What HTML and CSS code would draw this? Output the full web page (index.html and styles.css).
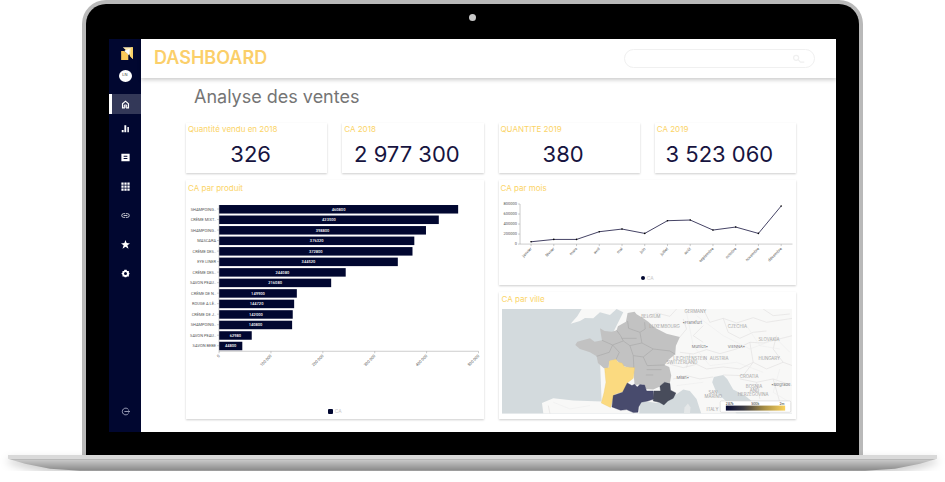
FILE: index.html
```html
<!DOCTYPE html>
<html lang="fr">

<head>
  <meta charset="UTF-8">
  <meta name="viewport" content="width=device-width, initial-scale=1.0">
  <title>Dashboard</title>
  <link rel="stylesheet" href="styles.css">
</head>

<body>
  <div class="laptop">
    <div class="lid">
      <div class="camera-row"><span class="camera"></span></div>
      <div class="screen">
        <nav class="sidebar">
          <a href="#" class="logo" aria-label="Accueil">
            <svg viewBox="0 0 36 40" width="12" height="13">
              <path d="M0 12H9L22 22V40H0Z" fill="#fbc95a" />
              <path d="M5 1H36V37L27 27L24 21L10 12L14 9Z" fill="#fde9ae" />
              <path d="M30 1H36V37L28 29Z" fill="#fbd263" />
              <path d="M10 12L26 5L24 25Z" fill="#fff" />
            </svg>
          </a>
          <span class="avatar">LN</span>
          <div class="menu">
            <a href="#" class="active" aria-label="Tableau de bord">
              <svg viewBox="0 0 24 24"><path d="M4 10L12 3L20 10V21H15V14H9V21H4Z" fill="none" stroke="#fff" stroke-width="3" /><path d="M10 12H14V21H10Z" fill="#aab" /></svg>
            </a>
            <a href="#" aria-label="Statistiques">
              <svg viewBox="0 0 24 24"><path d="M2 16H7V22H2ZM9 3H14V22H9ZM17 8H21V22H17Z" /></svg>
            </a>
            <a href="#" aria-label="Rapports">
              <svg viewBox="0 0 24 24"><path fill-rule="evenodd" d="M1 2H23V22H1ZM7 7V10H17V7ZM7 13V16H17V13Z" /></svg>
            </a>
            <a href="#" aria-label="Applications">
              <svg viewBox="0 0 24 24"><path d="M1 1H7V7H1ZM9 1H15V7H9ZM17 1H23V7H17ZM1 9H7V15H1ZM9 9H15V15H9ZM17 9H23V15H17ZM1 17H7V23H1ZM9 17H15V23H9ZM17 17H23V23H17Z" /></svg>
            </a>
            <a href="#" aria-label="Liens">
              <svg viewBox="0 0 24 24"><path d="M11 7H7A5 5 0 0 0 7 17H11M13 7H17A5 5 0 0 1 17 17H13M7 12H17" fill="none" stroke="#fff" stroke-width="2" /></svg>
            </a>
            <a href="#" aria-label="Favoris">
              <svg viewBox="0 0 24 24"><path d="M12 0L15 8L24 9L17 14L20 23L12 18L4 23L7 14L0 9L9 8Z" /></svg>
            </a>
            <a href="#" aria-label="Paramètres">
              <svg viewBox="0 0 24 24"><path fill-rule="evenodd" d="M9 2H15L16 5H21V10L23 12L21 15V20H16L14 22H10L8 20H4V15L1 12L4 9V5H8ZM12 8A4 4 0 1 0 12 16A4 4 0 1 0 12 8Z" /></svg>
            </a>
          </div>
          <a href="#" class="logout" aria-label="Déconnexion">
            <svg viewBox="0 0 24 24"><path d="M20 7A9 9 0 1 0 20 17M9 12H23M20 9L23 12L20 15" fill="none" stroke="#c5c8dc" stroke-width="2" /></svg>
          </a>
        </nav>

        <div class="page">
          <header class="topbar">
            <h1>DASHBOARD</h1>
            <div class="search">
              <input type="search" aria-label="Rechercher">
              <svg viewBox="0 0 24 16" width="16" height="10"><circle cx="9" cy="6" r="4" /><path d="M12 9L16 13H22" /></svg>
            </div>
          </header>

          <main>
            <h2>Analyse des ventes</h2>
            <div class="grid">
              <section class="card kpi">
                <h3>Quantité vendu en 2018</h3>
                <p>326</p>
              </section>
              <section class="card kpi">
                <h3>CA 2018</h3>
                <p>2 977 300</p>
              </section>
              <section class="card kpi">
                <h3>QUANTITE 2019</h3>
                <p>380</p>
              </section>
              <section class="card kpi">
                <h3>CA 2019</h3>
                <p>3 523 060</p>
              </section>

              <section class="card products">
                <h3>CA par produit</h3>
                <svg class="chart" id="barChart" viewBox="0 0 297 200"></svg>
                <div class="legend"><span class="square"></span>CA</div>
              </section>

              <section class="card months">
                <h3>CA par mois</h3>
                <svg class="chart" id="lineChart" viewBox="0 0 297 76"></svg>
                <div class="legend"><span class="dot"></span>CA</div>
              </section>

              <section class="card cities">
                <h3>CA par ville</h3>
                <svg class="map" viewBox="36 70 872 314">
                  <defs>
                    <linearGradient id="scale">
                      <stop offset="0" stop-color="#070b35" />
                      <stop offset=".3" stop-color="#3b3a42" />
                      <stop offset=".65" stop-color="#a88f45" />
                      <stop offset="1" stop-color="#fbd35c" />
                    </linearGradient>
                  </defs>
                  <rect x="36" y="70" width="872" height="314" fill="#d3dadd" />
                  <!-- land -->
                  <path fill="#f8f8f7" d="M275 70H908V384H842L800 358L765 330L730 312L712 280L700 268L672 274L667 290L676 312L690 330L712 350L740 384H634L620 340L600 316L580 312L560 326L500 352L450 344L448 384H160L156 352L190 338L250 345L335 348L330 220L400 80L380 70L360 88L330 80L310 98L285 97L270 106L242 114L262 92Z" />
                  <path fill="#e4e7e8" d="M582 384L584 366L594 354L602 366L600 384Z" />
                  <!-- borders -->
                  <g fill="none" stroke="#e2e1e1" stroke-width="2">
                    <path d="M470 94L500 82L540 92L560 70M570 154L590 130L580 100M640 70L660 110L700 98L740 112L790 96L830 110L908 98M570 200L610 205L650 192L690 204L740 190L780 170L820 172L908 150" />
                    <path d="M700 98L715 140L750 158L790 140L830 136M540 236L580 246L620 236L650 250L700 244L750 250L790 230L830 250L880 230L908 240M780 170L790 230L760 270L700 268M750 280L800 290L850 280L908 300M800 290L810 340M850 280L870 350" />
                    <path d="M820 70L850 90L900 85M550 280L590 270L630 280L670 274M600 205L590 246M860 150L850 190L880 230M180 384L175 360M640 120L610 150L640 170" />
                  </g>
                  <g fill="none" stroke="#eeeeee" stroke-width="2">
                    <path d="M590 80L610 180L660 240L740 230L820 260M620 90L700 150L780 190L860 160L900 200M560 300L640 290M190 350L240 370L300 360M770 120L810 180L870 190M870 250L850 320L900 350" />
                  </g>
                  <!-- regions -->
                  <path fill="#c2c2c2" d="M413 82L434 78L440 86L460 98L475 108L495 126L530 144L570 154L558 180L556 206L536 222L524 238L538 244L544 270L540 292L524 290L512 302L490 312L468 310L460 296L434 298L430 250L398 240L378 222L358 226L356 246L342 248L324 232L320 212L300 200L270 190L256 178L262 168L300 158L314 168L336 164L330 128L344 136L366 138L380 134L384 122L408 108Z" />
                  <g fill="none" stroke="#a9a9a9" stroke-width="2">
                    <path d="M413 106L416 128L450 140L466 130L464 110M336 164L368 178L400 166L392 150L380 134M450 140L456 172L490 190L540 196L556 206M368 178L358 200L320 212M400 166L420 180L456 172M368 178L388 200L378 222M420 180L430 210L460 214L490 190M430 210L432 250M460 214L472 240L524 238M395 158H440M470 252H515M468 268H490" />
                  </g>
                  <path fill="#fbda80" stroke="#e9c76d" d="M358 226L378 221L384 230L396 232L404 244L434 246L430 278L412 292L406 306L400 318L374 326L366 350L362 366L334 352L342 322L348 290L344 248L358 246Z" />
                  <path fill="#484b6d" stroke="#35385c" d="M412 292L426 300L434 296L442 304L450 297L464 298L470 316L490 316L492 340L474 346L454 350L446 364L444 380L430 381L410 372L392 374L366 364L370 330L398 320Z" />
                  <path fill="#484c5b" stroke="#35394b" d="M524 290L540 294L542 314L558 322L550 338L534 346L522 358L508 350L490 346L492 316L512 316L510 302Z" />
                  <!-- names -->
                  <g class="places">
                    <text x="584" y="82">GERMANY</text>
                    <text x="454" y="98">BELGIUM</text>
                    <text x="478" y="128">LUXEMBOURG</text>
                    <text x="714" y="128">CZECHIA</text>
                    <text x="806" y="167">SLOVAKIA</text>
                    <text x="550" y="222">LIECHTENSTEIN</text>
                    <text x="660" y="222">AUSTRIA</text>
                    <text x="530" y="235">SWITZERLAND</text>
                    <text x="806" y="223">HUNGARY</text>
                    <text x="750" y="278">CROATIA</text>
                    <text x="768" y="308">BOSNIA</text>
                    <text x="780" y="320">AND</text>
                    <text x="744" y="332">HERZEGOVINA</text>
                    <text x="656" y="325">SAN</text>
                    <text x="644" y="338">MARINO</text>
                    <text x="650" y="375">ITALY</text>
                  </g>
                  <g class="towns">
                    <text x="578" y="116">•Frankfurt</text>
                    <text x="606" y="188">Munich•</text>
                    <text x="714" y="186">VIENNA•</text>
                    <text x="560" y="281">Milan•</text>
                    <text x="844" y="302">•Belgrade</text>
                  </g>
                  <rect x="691" y="346" width="212" height="34" rx="4" fill="#fff" stroke="#d5d5d5" stroke-width="2" />
                  <rect x="708" y="360" width="178" height="15" fill="url(#scale)" />
                  <g class="scale-labels">
                    <text x="708" y="359">287k</text>
                    <text x="784" y="359">500k</text>
                    <text x="869" y="359">2m</text>
                  </g>
                </svg>
              </section>
            </div>
          </main>
        </div>
      </div>
    </div>
    <div class="base-shadow">
      <div class="base"></div>
    </div>
  </div>

  <script>
    const products = [
      ['SHAMPOING..', 460800], ['CRÈME MIXT..', 423500], ['SHAMPOING..', 398800],
      ['MASCARA', 376320], ['CRÈME DES..', 372800], ['EYE LINER', 344520],
      ['CRÈME DES..', 244080], ['SAVON PEAU..', 216080], ['CRÈME DE N..', 149900],
      ['ROUGE A LÈ..', 144720], ['CRÈME DE J..', 142000], ['SHAMPOING..', 140800],
      ['SAVON PEAU..', 62980], ['SAVON BEBE', 44800]
    ];
    const months = [
      ['janvier', 46000], ['février', 93000], ['mars', 93000], ['avril', 247000],
      ['mai', 300000], ['juin', 213000], ['juillet', 467000], ['août', 480000],
      ['septembre', 280000], ['octobre', 340000], ['novembre', 213000], ['décembre', 760000]
    ];

    function drawBars() {
      const left = 33, width = 259, top = 11, step = 10.5, axis = 157;
      let svg = '';
      products.forEach(([name, value], i) => {
        const y = top + i * step;
        const w = value / 500000 * width;
        svg += `<rect class="bar" x="${left}" y="${y}" width="${w}" height="8.5"/>`;
        svg += `<text class="label end" x="${left - 3}" y="${y + 5.5}">${name}</text>`;
        svg += `<path class="axis" d="M${left - 2} ${y + 4}h2"/>`;
        svg += `<text class="value" x="${left + w / 2}" y="${y + 5.7}">${value}</text>`;
      });
      svg += `<path class="axis" d="M${left} ${top}V${axis}H${left + width}"/>`;
      ['0', '100 000', '200 000', '300 000', '400 000', '500 000'].forEach((tick, i) => {
        const x = left + i * width / 5;
        svg += `<path class="axis" d="M${x} ${axis}v2"/>`;
        svg += `<text class="label end" transform="translate(${x + 1} ${axis + 5}) rotate(-45)">${tick}</text>`;
      });
      document.getElementById('barChart').innerHTML = svg;
    }

    function drawLine() {
      const left = 21, top = 10, height = 40, step = 22.7;
      const bottom = top + height;
      let svg = `<path class="axis" d="M${left} ${top}V${bottom}H293"/>`;
      [800000, 600000, 400000, 200000, 0].forEach((tick, i) => {
        const y = top + i * 10;
        svg += `<path class="axis" d="M${left - 2} ${y}h2"/>`;
        svg += `<text class="label end" x="${left - 3}" y="${y + 1}">${tick}</text>`;
      });
      const points = months.map(([name, value], i) => [left + 11 + i * step, bottom - value / 800000 * height]);
      svg += `<polyline class="line" points="${points.join(' ')}"/>`;
      points.forEach(([x, y], i) => {
        svg += `<circle cx="${x}" cy="${y}" r="0.8"/>`;
        svg += `<path class="axis" d="M${x} ${bottom}v2"/>`;
        svg += `<text class="label end" transform="translate(${x + 1} ${bottom + 5}) rotate(-45)">${months[i][0]}</text>`;
      });
      document.getElementById('lineChart').innerHTML = svg;
    }

    drawBars();
    drawLine();
  </script>
</body>

</html>
```
FILE: styles.css
```css
* {
  box-sizing: border-box;
}

body {
  margin: 0;
  background-color: #fff;
  font-family: Inter, "Liberation Sans", sans-serif;
  overflow: hidden;
}

h1,
h2,
h3,
p {
  margin: 0;
  font-weight: 400;
}

.laptop {
  padding: 0 8px;
}

.lid {
  margin: 0 74px;
  padding: 0 23px 23px;
  background-color: #000;
  border: 4px solid #b9b9b9;
  border-bottom: none;
  border-radius: 24px 24px 0 0;
}

.camera-row {
  height: 35px;
  display: flex;
  justify-content: center;
  padding-top: 10px;
}

.camera {
  width: 7px;
  height: 7px;
  border-radius: 50%;
  background-color: #c9c9c9;
}

.screen {
  display: flex;
  background-color: #fff;
}

.sidebar {
  width: 32px;
  flex-shrink: 0;
  display: flex;
  flex-direction: column;
  align-items: center;
  padding: 8px 0 16px;
  background-color: #010730;
}

.sidebar a {
  display: flex;
  justify-content: center;
  align-items: center;
}

.logo {
  padding-left: 4px;
}

.avatar {
  width: 13px;
  height: 12px;
  margin: 10px 0 12px;
  border-radius: 50%;
  background-color: #fff;
  color: #333;
  font-size: 4px;
  line-height: 9px;
  text-align: center;
}

.menu {
  width: 100%;
  flex: 1;
}

.menu a {
  height: 29px;
}

.menu a.active {
  height: 20px;
  background-color: #333858;
  border-left: 3px solid #fff;
  padding-right: 3px;
}

.menu svg,
.logout svg {
  width: 9px;
  height: 9px;
  fill: #fff;
}

.page {
  flex: 1;
  min-width: 0;
}

.topbar {
  display: flex;
  justify-content: space-between;
  align-items: center;
  height: 39px;
  padding: 0 21px 0 13px;
  box-shadow: 0 2px 4px rgba(0, 0, 0, 0.2);
}

h1 {
  color: #fbcf6a;
  font-size: 18px;
  line-height: 22px;
  font-weight: 600;
  padding-bottom: 2px;
}

.search {
  display: flex;
  align-items: center;
  width: 191px;
  height: 19px;
  padding: 0 8px;
  border: 1px solid #f0f0f0;
  border-radius: 10px;
}

.search input {
  flex: 1;
  min-width: 0;
  height: 14px;
  padding: 0;
  border: none;
  outline: none;
  background: none;
  font-size: 9px;
}

.search svg {
  fill: none;
  stroke: #f0f0f0;
  stroke-width: 2;
}

main {
  padding: 7px 40px 13px 45px;
}

h2 {
  margin-bottom: 14px;
  padding-left: 8px;
  color: #757575;
  font-size: 18px;
  line-height: 24px;
}

.grid {
  display: grid;
  grid-template-columns: repeat(4, 1fr);
  gap: 7px 15px;
}

.card {
  min-width: 0;
  background-color: #fff;
  box-shadow: 0 1px 2px rgba(0, 0, 0, 0.2);
}

.card h3 {
  padding: 0 2px;
  color: #fbd467;
  font-size: 8px;
  line-height: 12px;
  white-space: nowrap;
}

.kpi {
  height: 50px;
}

.kpi p {
  padding-right: 12px;
  color: #17143f;
  font-size: 22px;
  line-height: 38px;
  text-align: center;
}

.products,
.months,
.cities {
  grid-column: span 2;
  padding-top: 2px;
}

.products {
  grid-row: span 2;
  display: flex;
  flex-direction: column;
}

.chart,
.map {
  display: block;
  width: 100%;
}

.card.cities {
  padding: 1px 4px 5px 3px;
}

.cities h3 {
  padding: 0 0 4px;
}

.legend {
  display: flex;
  justify-content: center;
  align-items: center;
  gap: 2px;
  height: 15px;
  color: #ccc;
  font-size: 5px;
}

.products .legend {
  margin-top: auto;
}

.square,
.dot {
  width: 5px;
  height: 5px;
  background-color: #010730;
}

.square {
  border-radius: 1px;
}

.dot {
  width: 4px;
  height: 4px;
  border-radius: 50%;
}

.bar {
  fill: #010730;
}

.axis {
  fill: none;
  stroke: #999;
  stroke-width: 0.5;
}

.line {
  fill: none;
  stroke: #17143f;
  stroke-width: 0.8;
}

.label,
.value {
  font-family: Roboto, sans-serif;
  font-size: 4px;
  fill: #555;
}

.end {
  text-anchor: end;
}

.value {
  fill: #fff;
  font-weight: 500;
  text-anchor: middle;
}

.places,
.towns {
  font-size: 13px;
  fill: #a3a3a3;
}

.towns {
  font-size: 12px;
  fill: #777;
}

.scale-labels {
  font-size: 10px;
  fill: #111;
}

.base-shadow {
  filter: drop-shadow(0 4px 4px rgba(0, 0, 0, 0.2));
}

.base {
  height: 16px;
  background: linear-gradient(#d9d9d9 4px, #a8a8a8 4px, #c8c8c8 5px, #868686 16px);
  clip-path: polygon(0 0, 100% 0, 100% 4px, calc(100% - 17px) 9px, calc(100% - 42px) 14px, calc(100% - 72px) 16px, 72px 16px, 42px 14px, 17px 9px, 0 4px);
}
```
